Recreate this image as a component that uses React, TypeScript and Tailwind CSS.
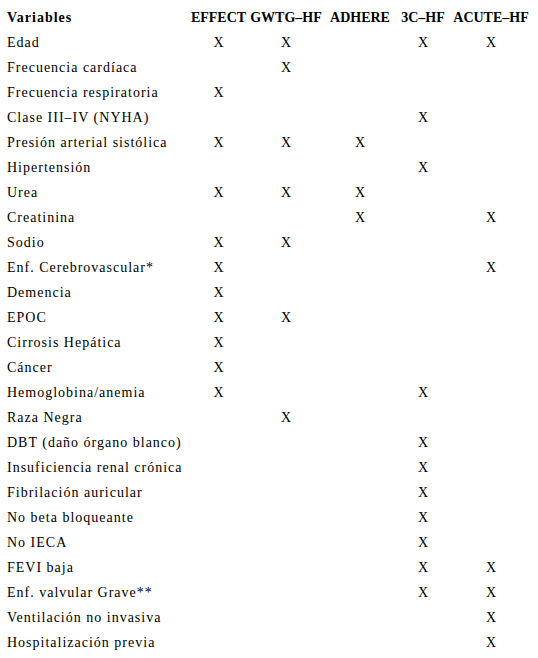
const cols = ['EFFECT', 'GWTG–HF', 'ADHERE', '3C–HF', 'ACUTE–HF']

const rows: [string, number[]][] = [
  ['Edad', [0, 1, 3, 4]],
  ['Frecuencia cardíaca', [1]],
  ['Frecuencia respiratoria', [0]],
  ['Clase III–IV (NYHA)', [3]],
  ['Presión arterial sistólica', [0, 1, 2]],
  ['Hipertensión', [3]],
  ['Urea', [0, 1, 2]],
  ['Creatinina', [2, 4]],
  ['Sodio', [0, 1]],
  ['Enf. Cerebrovascular*', [0, 4]],
  ['Demencia', [0]],
  ['EPOC', [0, 1]],
  ['Cirrosis Hepática', [0]],
  ['Cáncer', [0]],
  ['Hemoglobina/anemia', [0, 3]],
  ['Raza Negra', [1]],
  ['DBT (daño órgano blanco)', [3]],
  ['Insuficiencia renal crónica', [3]],
  ['Fibrilación auricular', [3]],
  ['No beta bloqueante', [3]],
  ['No IECA', [3]],
  ['FEVI baja', [3, 4]],
  ['Enf. valvular Grave**', [3, 4]],
  ['Ventilación no invasiva', [4]],
  ['Hospitalización previa', [4]],
]

export default function App() {
  return (
    <div className="w-[538px] h-[658px] bg-white pt-[5px] pl-[7px] text-black text-[14px]" style={{ fontFamily: '"Liberation Serif", serif' }}>
      <div className="grid grid-cols-[181px_61px_74px_74px_52px_84px] auto-rows-[25px] items-center">
        <div className="font-bold tracking-[1px]">Variables</div>
        {cols.map(c => (
          <div key={c} className="font-bold text-center whitespace-nowrap">{c}</div>
        ))}
        {rows.map(([label, marks]) => (
          <>
            <div key={label} className="tracking-[1px] whitespace-nowrap">{label}</div>
            {cols.map((c, i) => (
              <div key={label + c} className="text-center">{marks.includes(i) ? 'X' : ''}</div>
            ))}
          </>
        ))}
      </div>
    </div>
  )
}
